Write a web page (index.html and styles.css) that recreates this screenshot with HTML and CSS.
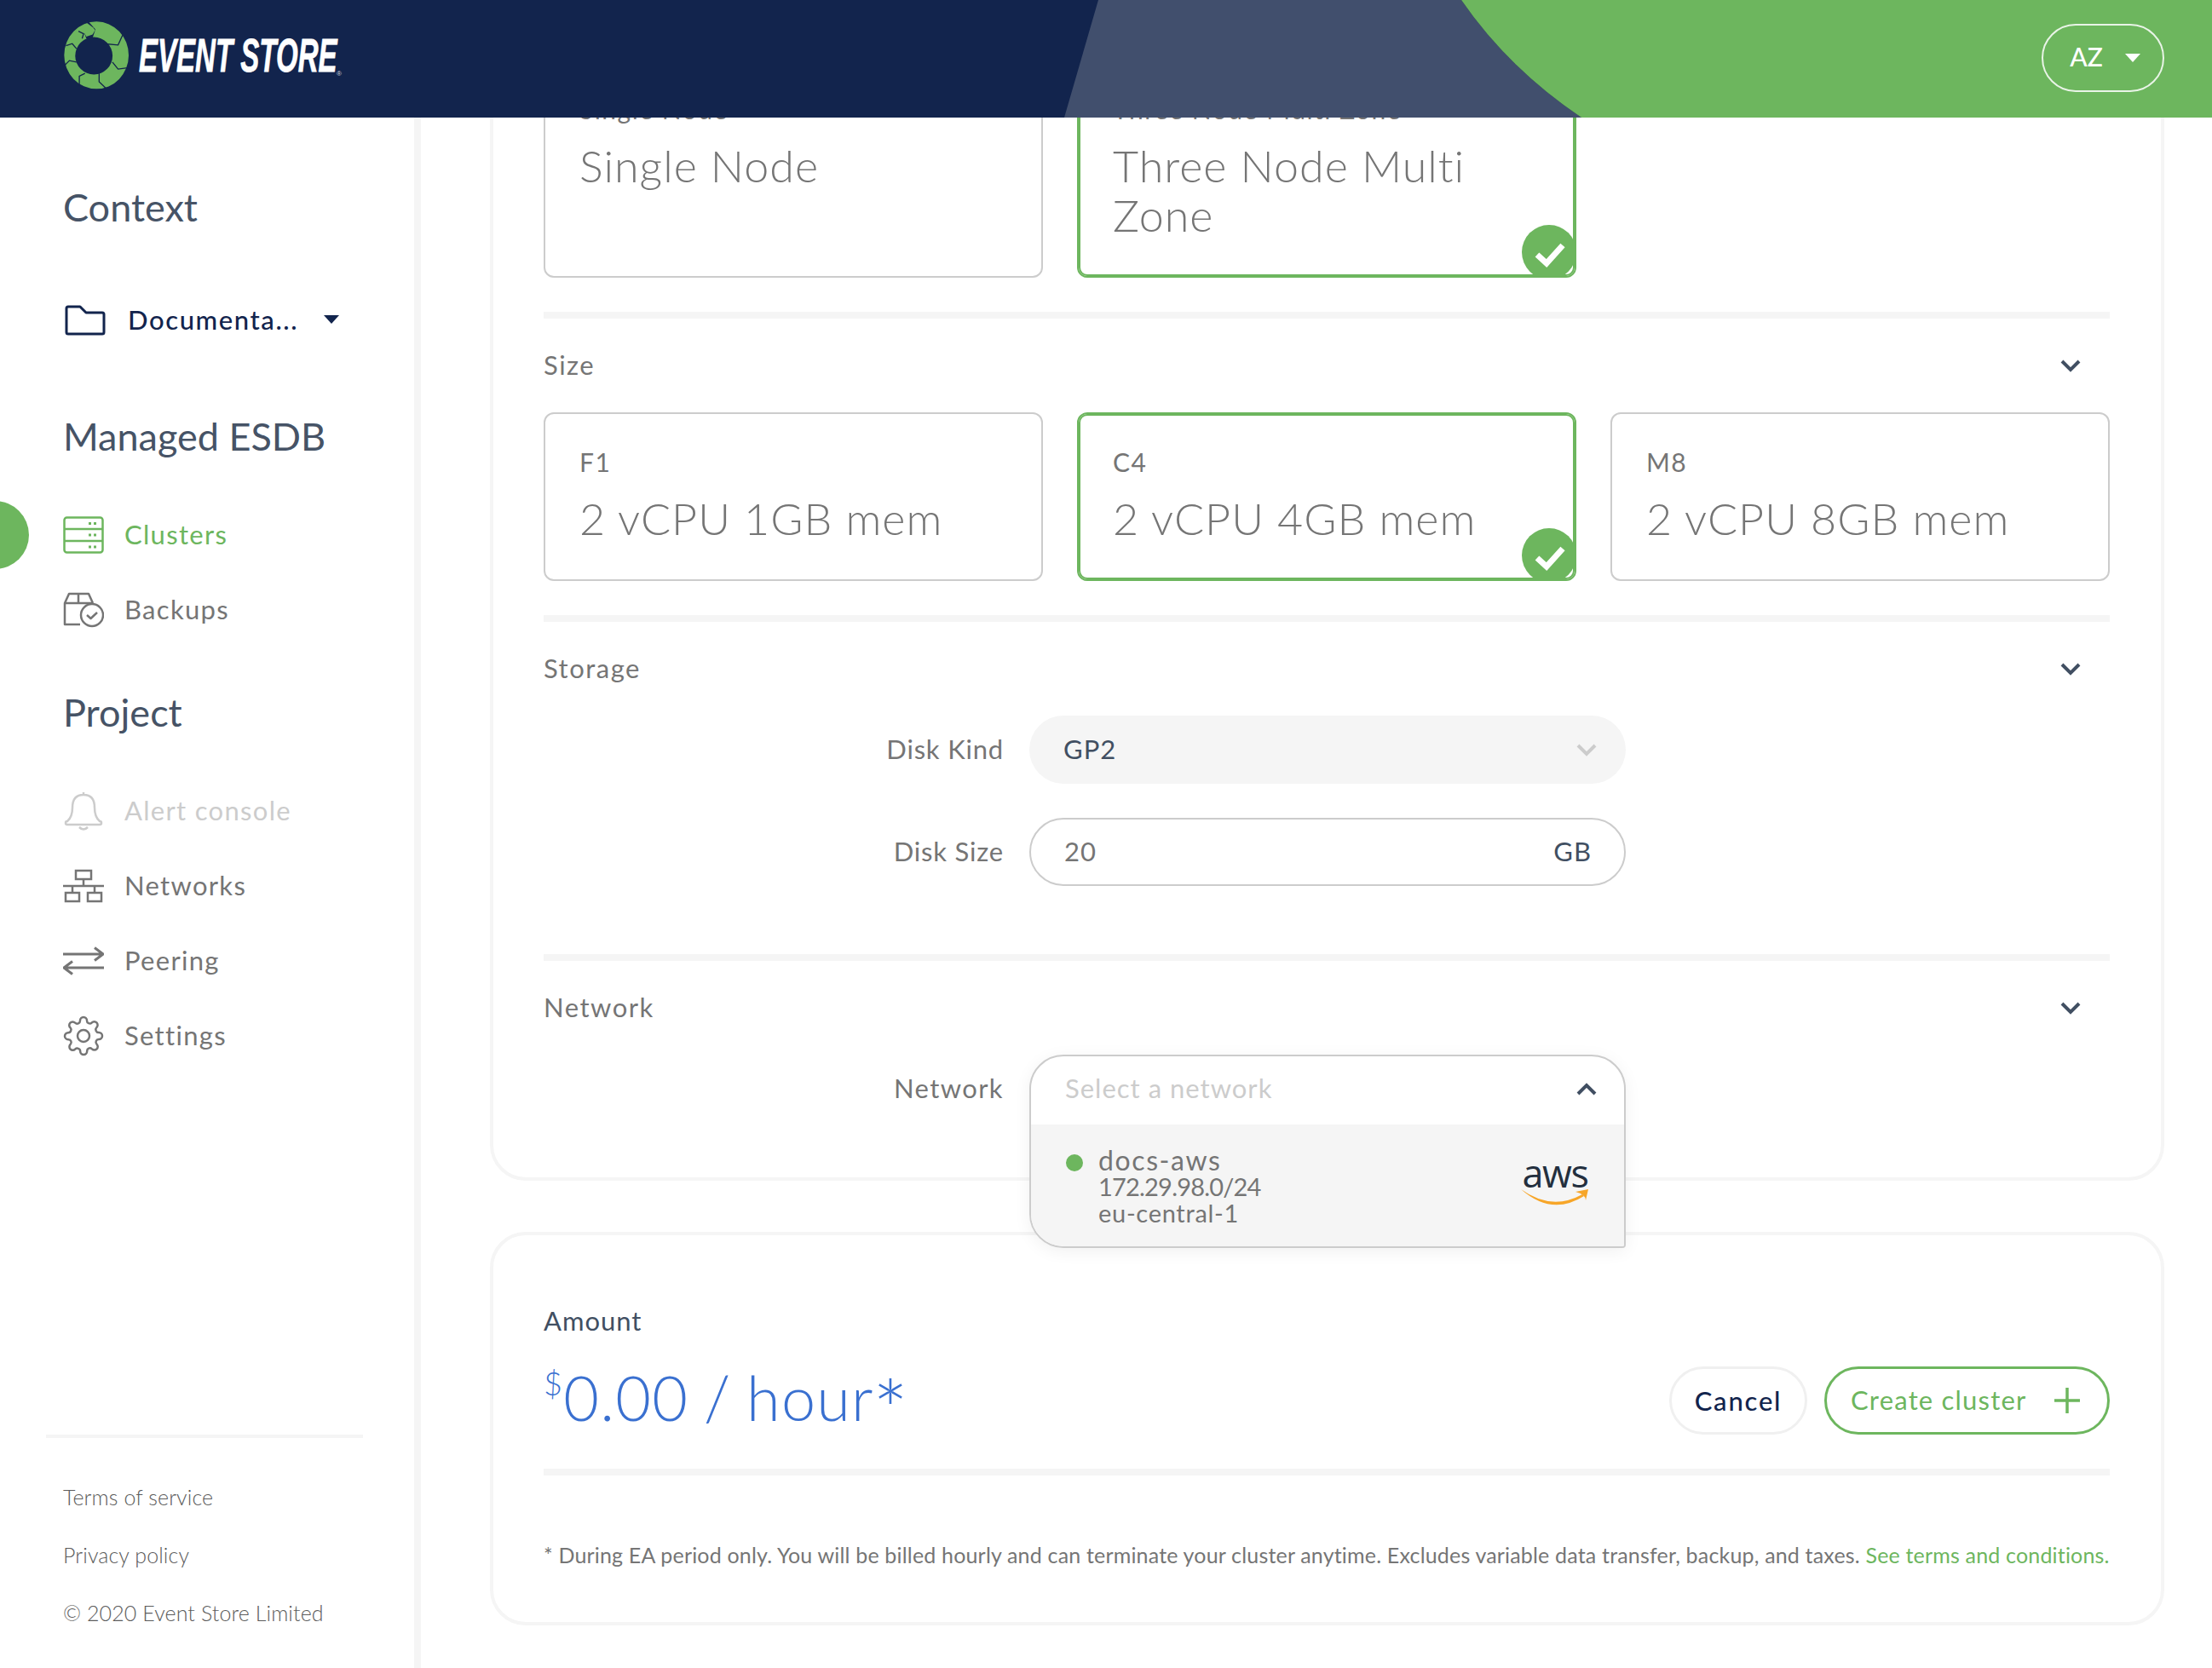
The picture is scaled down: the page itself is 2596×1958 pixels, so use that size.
FILE: index.html
```html
<!DOCTYPE html>
<html lang="en">
	<head>
		<meta charset="UTF-8" />
		<meta name="viewport" content="width=device-width, initial-scale=1.0" />
		<title>Event Store Cloud</title>
		<link rel="stylesheet" href="styles.css">
	</head>
	<body>
		<header class="topbar">
			<!-- background shapes -->
			<svg class="topbar-shapes" viewBox="0 0 2596 138" preserveAspectRatio="none">
				<path d="M1289 0 L1715 0 Q1770 80 1856 138 L1249 138 Z" fill="#414f6d" />
				<path d="M1715 0 L2596 0 L2596 138 L1856 138 Q1770 80 1715 0 Z" fill="#6db65e" />
			</svg>
			<div class="logo">
				<svg class="logo-mark" viewBox="215 65 240 250">
					<path fill-rule="evenodd" fill="#6db65e" d="M336 72 A113 118 0 1 1 335 310 A113 118 0 1 1 336 72 Z M326 127 A66 66 0 1 0 327 259 A66 66 0 1 0 326 127 Z" />
					<g fill="none" stroke="#12244d" stroke-width="4">
						<polyline points="428,120 412,155 360,150" />
						<polyline points="392,215 412,240 450,235" />
						<polyline points="345,255 345,285 368,307" />
						<polyline points="295,255 275,265 275,300" />
						<polyline points="222,228 240,210 265,215" />
						<polyline points="228,157 250,150 265,168" />
						<polyline points="272,106 290,115 285,132" />
					</g>
					<path fill="#12244d" d="M280 60 L306 70 L332 100 L322 130 L300 132 L292 112 L326 95 Z" />
					<path fill="#6db65e" d="M276 105 L322 92 L331 102 L322 118 L300 125 L292 112 Z" />
				</svg>
				<span class="logo-text">EVENT STORE</span>
				<span class="logo-reg">®</span>
			</div>
			<button class="avatar">AZ <span class="caret caret-white"></span></button>
		</header>

		<div class="app">
			<aside class="sidebar">
				<h2 class="side-title side-title-first">Context</h2>
				<div class="context-row">
					<svg class="folder" viewBox="0 0 48 36" fill="none" stroke="#12244d" stroke-width="3" stroke-linejoin="round">
						<path d="M2 4 Q2 2 4 2 H18 L25 9 H44 Q46 9 46 11 V32 Q46 34 44 34 H4 Q2 34 2 32 Z" />
					</svg>
					<span class="context-name">Documenta...</span>
					<span class="caret"></span>
				</div>

				<h2 class="side-title side-title-managed">Managed ESDB</h2>
				<nav class="nav">
					<a class="nav-item active">
						<svg class="nav-icon" viewBox="0 0 48 44" fill="none" stroke="#6db65e" stroke-width="2.5">
							<rect x="1.5" y="1.5" width="45" height="41" rx="3" />
							<path d="M1.5 15 H46.5 M1.5 29 H46.5" />
							<path d="M30 8.5 H33 M36 8.5 H39 M30 22 H33 M36 22 H39 M30 36 H33 M36 36 H39" stroke-width="3" />
						</svg>
						Clusters
					</a>
					<a class="nav-item">
						<svg class="nav-icon" viewBox="0 0 48 44" fill="none" stroke="#757575" stroke-width="2.5" stroke-linejoin="round">
							<path d="M20 39 H2 V14 L7 3 H30 L35 14" />
							<path d="M2 14 H20 M18 3 V14 M20 14 H35" />
							<circle cx="34" cy="28" r="13" />
							<path d="M28 28 L32.5 32 L40 25" />
						</svg>
						Backups
					</a>
				</nav>

				<h2 class="side-title side-title-project">Project</h2>
				<nav class="nav">
					<a class="nav-item disabled">
						<svg class="nav-icon" viewBox="0 0 48 48" fill="none" stroke="#cccccc" stroke-width="2.5" stroke-linejoin="round">
							<path d="M24 2 V5 M5 36 Q3 36 3 38 Q3 40 5 40 H43 Q45 40 45 38 Q45 36 43 36 Q37 31 37 20 Q37 5 24 5 Q11 5 11 20 Q11 31 5 36 Z" />
							<path d="M19 43 Q24 48 29 43" />
						</svg>
						Alert console
					</a>
					<a class="nav-item">
						<svg class="nav-icon" viewBox="0 0 48 40" fill="none" stroke="#757575" stroke-width="2.5">
							<rect x="15" y="2" width="18" height="10" />
							<path d="M24 12 V20 M0 20 H48 M11 20 V28 M37 20 V28" />
							<rect x="3" y="28" width="16" height="10" />
							<rect x="29" y="28" width="16" height="10" />
						</svg>
						Networks
					</a>
					<a class="nav-item">
						<svg class="nav-icon" viewBox="0 0 48 33" fill="none" stroke="#757575" stroke-width="3" stroke-linejoin="round">
							<path d="M0 8.5 H46 M37 1 L47 8.5 L37 16" />
							<path d="M48 24.5 H2 M11 17 L1 24.5 L11 32" />
						</svg>
						Peering
					</a>
					<a class="nav-item">
						<svg class="nav-icon" viewBox="0 0 24 24" fill="none" stroke="#757575" stroke-width="1.25">
							<circle cx="12" cy="12" r="3.5" />
							<path d="M19.4 15a1.65 1.65 0 0 0 .33 1.82l.06.06a2 2 0 0 1 0 2.83 2 2 0 0 1-2.83 0l-.06-.06a1.65 1.65 0 0 0-1.82-.33 1.65 1.65 0 0 0-1 1.51V21a2 2 0 0 1-2 2 2 2 0 0 1-2-2v-.09A1.65 1.65 0 0 0 9 19.4a1.65 1.65 0 0 0-1.82.33l-.06.06a2 2 0 0 1-2.83 0 2 2 0 0 1 0-2.83l.06-.06a1.65 1.65 0 0 0 .33-1.82 1.65 1.65 0 0 0-1.51-1H3a2 2 0 0 1-2-2 2 2 0 0 1 2-2h.09A1.65 1.65 0 0 0 4.6 9a1.65 1.65 0 0 0-.33-1.82l-.06-.06a2 2 0 0 1 0-2.83 2 2 0 0 1 2.83 0l.06.06a1.65 1.65 0 0 0 1.82.33H9a1.65 1.65 0 0 0 1-1.51V3a2 2 0 0 1 2-2 2 2 0 0 1 2 2v.09a1.65 1.65 0 0 0 1 1.51 1.65 1.65 0 0 0 1.82-.33l.06-.06a2 2 0 0 1 2.83 0 2 2 0 0 1 0 2.83l-.06.06a1.65 1.65 0 0 0-.33 1.82V9a1.65 1.65 0 0 0 1.51 1H21a2 2 0 0 1 2 2 2 2 0 0 1-2 2h-.09a1.65 1.65 0 0 0-1.51 1z" />
						</svg>
						Settings
					</a>
				</nav>

				<footer class="side-footer">
					<p>Terms of service</p>
					<p>Privacy policy</p>
					<p>© 2020 Event Store Limited</p>
				</footer>
			</aside>

			<main class="content">
				<section class="panel panel-form">
					<div class="tiles">
						<div class="tile tile-tall">
							<div class="tile-label">Single Node</div>
							<div class="tile-value">Single Node</div>
						</div>
						<div class="tile tile-tall selected">
							<div class="tile-label">Three Node Multi Zone</div>
							<div class="tile-value">Three Node Multi Zone</div>
							<svg class="tile-check" viewBox="0 0 64 64">
								<circle cx="32" cy="32" r="32" fill="#6db65e" />
								<polyline points="18,35 29,45 48,24" fill="none" stroke="#fff" stroke-width="7" />
							</svg>
						</div>
					</div>
					<hr class="divider" />

					<div class="section-head">
						<span>Size</span>
						<svg class="chevron" viewBox="0 0 24 15"><polyline points="2,2 12,12 22,2" /></svg>
					</div>
					<div class="tiles">
						<div class="tile">
							<div class="tile-label">F1</div>
							<div class="tile-value">2 vCPU 1GB mem</div>
						</div>
						<div class="tile selected">
							<div class="tile-label">C4</div>
							<div class="tile-value">2 vCPU 4GB mem</div>
							<svg class="tile-check" viewBox="0 0 64 64">
								<circle cx="32" cy="32" r="32" fill="#6db65e" />
								<polyline points="18,35 29,45 48,24" fill="none" stroke="#fff" stroke-width="7" />
							</svg>
						</div>
						<div class="tile">
							<div class="tile-label">M8</div>
							<div class="tile-value">2 vCPU 8GB mem</div>
						</div>
					</div>
					<hr class="divider" />

					<div class="section-head">
						<span>Storage</span>
						<svg class="chevron" viewBox="0 0 24 15"><polyline points="2,2 12,12 22,2" /></svg>
					</div>
					<div class="form-row">
						<label>Disk Kind</label>
						<div class="field field-select">
							<span>GP2</span>
							<svg class="chevron chevron-light" viewBox="0 0 24 15"><polyline points="2,2 12,12 22,2" /></svg>
						</div>
					</div>
					<div class="form-row form-row-gap">
						<label>Disk Size</label>
						<div class="field field-input">
							<span class="field-value">20</span>
							<span>GB</span>
						</div>
					</div>
					<hr class="divider divider-storage" />

					<div class="section-head">
						<span>Network</span>
						<svg class="chevron" viewBox="0 0 24 15"><polyline points="2,2 12,12 22,2" /></svg>
					</div>
					<div class="form-row">
						<label class="label-wide">Network</label>
						<div class="dropdown-slot">
							<div class="dropdown">
								<div class="dropdown-head">
									<span>Select a network</span>
									<svg class="chevron chevron-up" viewBox="0 0 24 15"><polyline points="2,13 12,3 22,13" /></svg>
								</div>
								<div class="dropdown-option">
									<span class="status-dot"></span>
									<div class="option-text">
										<div class="option-name">docs-aws</div>
										<div class="option-ip">172.29.98.0/24</div>
										<div class="option-region">eu-central-1</div>
									</div>
									<div class="aws">
										<span class="aws-text">aws</span>
										<svg class="aws-smile" viewBox="0 0 80 20">
											<path d="M0 0 Q36 26 72 6 L74 8 Q36 32 0 0 Z" fill="#f7a629" />
											<path d="M64 3 L79 0 L76 13 Q76 6 64 3 Z" fill="#f7a629" />
										</svg>
									</div>
								</div>
							</div>
						</div>
					</div>
				</section>

				<section class="panel panel-amount">
					<div class="amount-row">
						<div>
							<div class="amount-label">Amount</div>
							<div class="amount-value"><sup>$</sup>0.00 / hour<span class="asterisk">*</span></div>
						</div>
						<div class="actions">
							<button class="btn btn-cancel">Cancel</button>
							<button class="btn btn-create">
								Create cluster
								<svg class="plus" viewBox="0 0 30 30"><path d="M15 0 V30 M0 15 H30" /></svg>
							</button>
						</div>
					</div>
					<hr class="divider" />
					<p class="note">* During EA period only. You will be billed hourly and can terminate your cluster anytime. Excludes variable data transfer, backup, and taxes. <a>See terms and conditions.</a></p>
				</section>
			</main>
		</div>
	</body>
</html>
```

FILE: styles.css
```css
* {
	box-sizing: border-box;
}
html,
body {
	height: 100%;
}
body {
	margin: 0;
	overflow: hidden;
	font-family: Lato, "Open Sans", sans-serif;
	font-size: 31px;
	letter-spacing: 1px;
	color: #757575;
	background-color: white;
}

/* top bar */
.topbar {
	position: relative;
	z-index: 2;
	height: 138px;
	display: flex;
	align-items: center;
	justify-content: space-between;
	padding: 0 56px 0 73px;
	background-color: #12244d;
}
.topbar-shapes {
	position: absolute;
	top: 0;
	left: 0;
	width: 100%;
	height: 100%;
}
.logo {
	position: relative;
	display: flex;
	align-items: center;
	height: 138px;
}
.logo-mark {
	width: 80px;
	height: 83px;
	margin-top: -10px;
}
.logo-text {
	width: 232px;
	margin-left: 10px;
	margin-top: -9px;
	font-family: "Liberation Sans", sans-serif;
	font-size: 56px;
	font-weight: bold;
	font-style: italic;
	line-height: 56px;
	letter-spacing: 0;
	color: white;
	white-space: nowrap;
	-webkit-text-stroke: 0.8px white;
	transform: scaleX(0.59);
	transform-origin: left center;
}
.logo-reg {
	margin-top: 34px;
	font-family: "Liberation Sans", sans-serif;
	font-size: 8px;
	letter-spacing: 0;
	color: #cfd3db;
}
.avatar {
	position: relative;
	width: 144px;
	height: 80px;
	margin-top: -2px;
	padding: 0 0 5px 5px;
	display: flex;
	align-items: center;
	justify-content: center;
	gap: 26px;
	font-family: inherit;
	font-size: 30px;
	font-weight: 500;
	color: white;
	background: transparent;
	border: 2px solid rgba(255, 255, 255, 0.85);
	border-radius: 40px;
}
.caret {
	display: inline-block;
	width: 0;
	height: 0;
	border-left: 9px solid transparent;
	border-right: 9px solid transparent;
	border-top: 10px solid #12244d;
}
.caret-white {
	border-top-color: white;
	margin-top: 5px;
}

/* layout */
.app {
	display: flex;
	height: calc(100% - 138px);
}

/* sidebar */
.sidebar {
	position: relative;
	flex: 0 0 494px;
	display: flex;
	flex-direction: column;
	padding-left: 74px;
	border-right: 8px solid #f5f5f5;
}
.side-title {
	margin: 0;
	font-size: 45px;
	font-weight: 400;
	letter-spacing: 0;
	line-height: 56px;
	color: #465366;
}
.side-title-first {
	margin-top: 77px;
}
.side-title-managed {
	margin-top: 81px;
}
.side-title-project {
	margin-top: 48px;
}
.context-row {
	display: flex;
	align-items: center;
	height: 56px;
	margin-top: 76px;
	font-weight: 500;
	letter-spacing: 1.6px;
	color: #12244d;
}
.folder {
	width: 48px;
	height: 36px;
	margin: 2px 26px 0 2px;
}
.context-name {
	width: 230px;
}
.nav {
	margin-top: 44px;
}
.nav-item {
	position: relative;
	display: flex;
	align-items: center;
	gap: 24px;
	height: 88px;
	padding-bottom: 3px;
	letter-spacing: 1.3px;
}
.nav-icon {
	flex: 0 0 48px;
	width: 48px;
	height: 48px;
	margin-top: 3px;
}
.nav-item.active {
	color: #6db65e;
}
/* the little half dot on the left of the active item */
.nav-item.active::before {
	content: "";
	position: absolute;
	left: -120px;
	top: 4px;
	width: 80px;
	height: 80px;
	border-radius: 50%;
	background-color: #6db65e;
}
.nav-item.disabled {
	color: #cccccc;
}
.side-footer {
	margin: auto 0 30px -20px;
	width: 372px;
	padding-top: 36px;
	border-top: 4px solid #f5f5f5;
	font-size: 25px;
	font-weight: 300;
	letter-spacing: 0.1px;
	color: #5c5c5c;
}
.side-footer p {
	margin: 0 0 0 20px;
	height: 68px;
	line-height: 66px;
}

/* main column */
.content {
	flex: 1;
	min-width: 0;
	height: 100%;
	overflow: hidden;
	padding: 0 56px 0 81px;
}
.panel {
	border: 4px solid #f5f5f5;
	border-radius: 42px;
	padding: 0 60px 0 59px;
}
/* page is scrolled down a bit, the top of this panel is under the bar */
.panel-form {
	margin-top: -200px;
	padding-top: 128px;
	height: 1448px;
}
.panel-amount {
	margin-top: 60px;
	height: 462px;
	padding-top: 72px;
}
.tiles {
	display: grid;
	grid-template-columns: repeat(3, 1fr);
	gap: 40px;
}
.tile {
	position: relative;
	overflow: hidden;
	height: 198px;
	padding: 38px 40px 0;
	border: 2px solid #cccccc;
	border-radius: 12px;
}
.tile-tall {
	height: 256px;
}
.tile.selected {
	border-color: #6db65e;
	box-shadow: inset 0 0 0 2px #6db65e;
}
.tile-label {
	font-size: 30px;
	letter-spacing: 1.5px;
	line-height: 36px;
	white-space: nowrap;
}
.tile-value {
	margin-top: 19px;
	font-size: 52px;
	font-weight: 300;
	letter-spacing: 1px;
	line-height: 58px;
}
.tile-check {
	position: absolute;
	right: -2px;
	bottom: -4px;
	width: 64px;
	height: 64px;
}
.divider {
	height: 8px;
	margin: 40px 0 0;
	border: 0;
	background-color: #f5f5f5;
}
.divider-storage {
	margin-top: 80px;
}
.section-head {
	display: flex;
	align-items: center;
	justify-content: space-between;
	height: 110px;
	padding: 0 34px 3px 0;
	letter-spacing: 1.5px;
}
.chevron {
	width: 24px;
	height: 15px;
	margin-top: 3px;
	fill: none;
	stroke: #414f62;
	stroke-width: 4;
}
.chevron-light {
	stroke: #cccccc;
}
.form-row {
	display: grid;
	grid-template-columns: 540px 700px;
	column-gap: 30px;
	align-items: center;
}
.form-row-gap {
	margin-top: 40px;
}
.form-row label {
	padding-bottom: 3px;
	letter-spacing: 0.8px;
	text-align: right;
}
.form-row .label-wide {
	letter-spacing: 1.4px;
}
.field {
	display: flex;
	align-items: center;
	justify-content: space-between;
	height: 80px;
	padding: 0 40px 3px;
	border-radius: 40px;
	color: #414f62;
}
.field-select {
	background-color: #f5f5f5;
	padding-right: 34px;
}
.field-input {
	border: 2px solid #cccccc;
	padding: 0 38px 3px 39px;
}
.field-value {
	color: #757575;
}
.dropdown-slot {
	position: relative;
	height: 80px;
}
.dropdown {
	position: absolute;
	top: 0;
	left: 0;
	right: 0;
	z-index: 1;
	height: 227px;
	overflow: hidden;
	background-color: white;
	border: 2px solid #cccccc;
	border-radius: 40px 40px 4px 40px;
	box-shadow: 0 4px 20px rgba(0, 0, 0, 0.06);
}
.dropdown-head {
	display: flex;
	align-items: center;
	justify-content: space-between;
	height: 80px;
	padding: 0 32px 6px 40px;
	color: #cccccc;
}
.chevron-up {
	stroke: #414f62;
}
.dropdown-option {
	display: flex;
	align-items: flex-start;
	height: 145px;
	padding: 26px 40px 0 41px;
	background-color: #f5f5f5;
	font-size: 29px;
	line-height: 31px;
}
.status-dot {
	flex: 0 0 20px;
	height: 20px;
	margin-top: 9px;
	border-radius: 50%;
	background-color: #6db65e;
}
.option-text {
	flex: 1;
	margin-left: 18px;
}
.option-name {
	font-size: 32px;
	letter-spacing: 1.6px;
}
.option-ip {
	letter-spacing: -0.8px;
}
.option-region {
	letter-spacing: 0.7px;
}
.aws {
	width: 80px;
	margin: 18px 1px 0 -2px;
	display: flex;
	flex-direction: column;
	align-items: center;
}
.aws-text {
	margin-top: -3px;
	font-family: "Open Sans", sans-serif;
	font-size: 45px;
	line-height: 32px;
	letter-spacing: -1.5px;
	color: #232f3e;
}
.aws-smile {
	width: 80px;
	height: 20px;
	margin-top: 3px;
}
.amount-row {
	display: flex;
	align-items: flex-end;
	justify-content: space-between;
	height: 162px;
}
.amount-label {
	line-height: 56px;
	color: #414f62;
}
.amount-value {
	height: 106px;
	font-size: 72px;
	font-weight: 300;
	letter-spacing: 1.2px;
	word-spacing: -3px;
	line-height: 124px;
	color: #3a70d0;
}
.amount-value sup {
	font-size: 38px;
	line-height: 0;
	vertical-align: 30px;
}
.asterisk {
	font-size: 100px;
	line-height: 0;
	vertical-align: -25px;
	margin-left: -2px;
}
.actions {
	display: flex;
	gap: 20px;
}
.btn {
	display: flex;
	align-items: center;
	height: 80px;
	padding-bottom: 2px;
	font-family: inherit;
	font-size: 31px;
	font-weight: 500;
	letter-spacing: 1.8px;
	background: white;
	border-radius: 40px;
}
.btn-cancel {
	width: 162px;
	justify-content: center;
	color: #12244d;
	border: 3px solid #f0f0f0;
}
.btn-create {
	width: 335px;
	padding: 0 32px 2px 28px;
	justify-content: space-between;
	color: #6db65e;
	border: 3px solid #6db65e;
	font-weight: 400;
	letter-spacing: 1.2px;
}
.plus {
	width: 30px;
	height: 30px;
	margin-top: 2px;
	fill: none;
	stroke: #6db65e;
	stroke-width: 3.5;
}
.note {
	margin: 75px 0 0;
	font-size: 25px;
	letter-spacing: 0.18px;
	line-height: 36px;
	white-space: nowrap;
}
.note a {
	color: #6db65e;
}
```
